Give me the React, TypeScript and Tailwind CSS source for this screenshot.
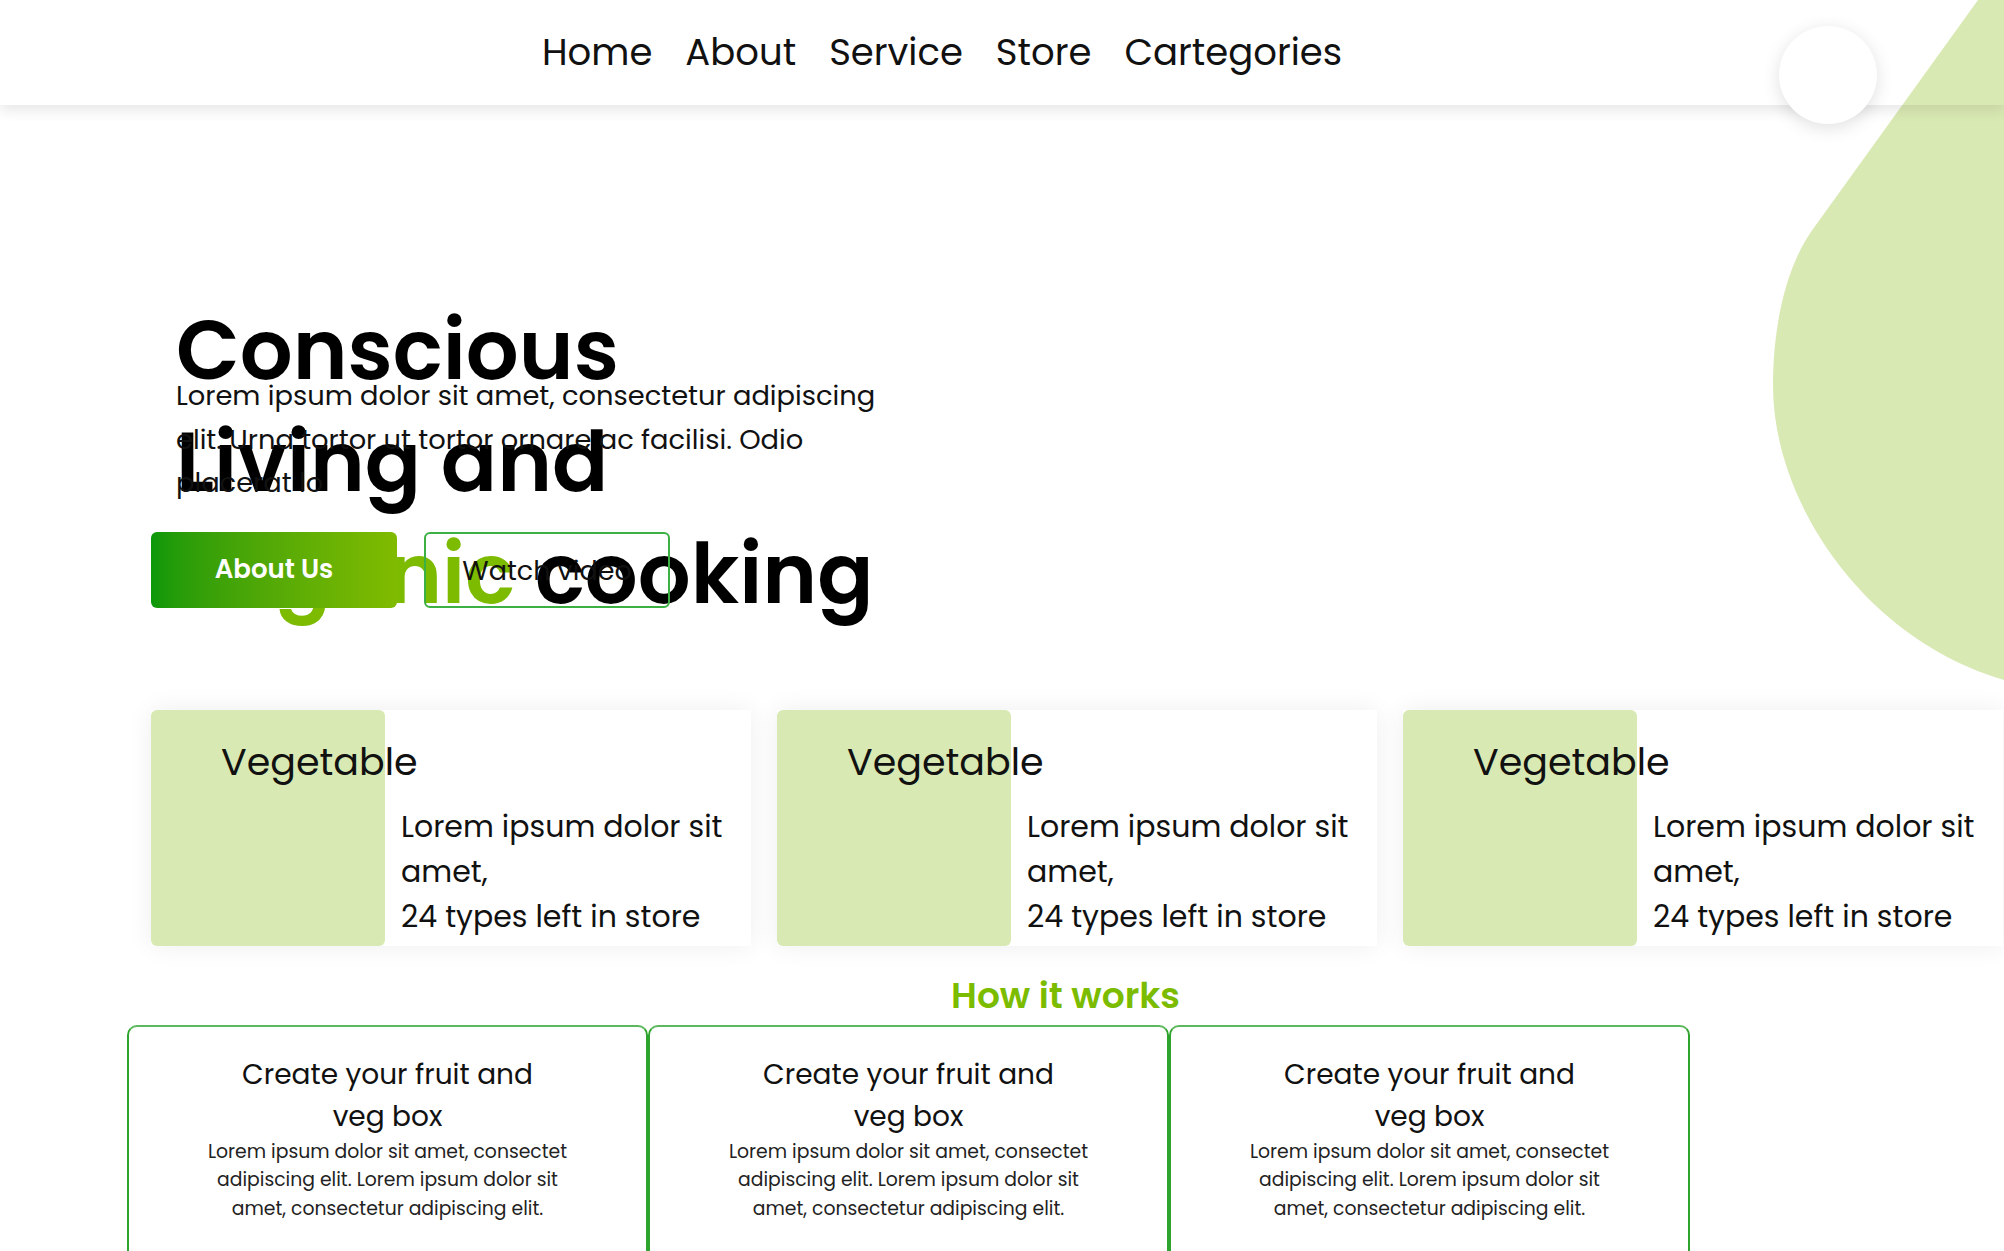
const navLinks = ['Home', 'About', 'Service', 'Store', 'Cartegories']
const items = [0, 1, 2]

function Blob() {
  return (
    <svg
      className="absolute right-0 top-0 h-[690px] w-[232px]"
      viewBox="0 0 232 690"
      fill="none"
    >
      <path
        d="M206 0 L41 229 C15 265 1 322 1 386 C1 500 90 638 232 680 L232 0 Z"
        fill="#d9e9b3"
      />
    </svg>
  )
}

function VegCard() {
  return (
    <div className="flex h-[236px] w-[600px] shrink-0 bg-white shadow-[0_0_24px_rgba(0,0,0,0.07)]">
      <div className="w-[234px] shrink-0 rounded-md bg-[#d9e9b3]" />
      <div className="pl-4 pt-[22px]">
        <h3 className="-ml-[180px] text-[38px] leading-[60px] text-[#111]">Vegetable</h3>
        <p className="mt-[12px] text-[30px] leading-[45px] text-[#111]">
          Lorem ipsum dolor sit
          <br />
          amet,
          <br />
          24 types left in store
        </p>
      </div>
    </div>
  )
}

function StepCard() {
  return (
    <div className="min-h-[280px] w-[521px] shrink-0 rounded-t-[10px] border-x-2 border-t-2 border-x-[#2ea42e] border-t-[#5cb85c] pt-[27px] text-center">
      <h4 className="text-[28px] leading-[42px] text-[#111]">
        Create your fruit and
        <br />
        veg box
      </h4>
      <p className="text-[18.8px] leading-[28.5px] text-[#222]">
        Lorem ipsum dolor sit amet, consectet
        <br />
        adipiscing elit. Lorem ipsum dolor sit
        <br />
        amet, consectetur adipiscing elit.
      </p>
    </div>
  )
}

export default function App() {
  return (
    <div className="relative min-h-screen w-full overflow-hidden bg-white font-[family-name:Poppins,Inter,sans-serif] text-black">
      <Blob />

      {/* Nav */}
      <nav className="relative flex h-[105px] justify-between pl-[542px] pr-[127px] shadow-[0_6px_12px_rgba(0,0,0,0.09)]">
        <ul className="flex items-center gap-[33px] text-[37px] leading-none text-[#111]">
          {navLinks.map((link) => (
            <li key={link}>
              <a href="#">{link}</a>
            </li>
          ))}
        </ul>
        <div className="mt-[26px] size-[98px] rounded-full bg-white shadow-[0_4px_18px_rgba(0,0,0,0.12)]" />
      </nav>

      {/* Hero */}
      <section className="pl-[176px] pt-[189px]">
        <h1 className="h-[80px] text-[83px] font-semibold leading-[112px]">
          Conscious
          <br />
          Living and
          <br />
          <span className="text-[#7cbb00]">Organic</span> cooking
        </h1>
        <p className="text-[27.3px] leading-[43.5px] text-[#111]">
          Lorem ipsum dolor sit amet, consectetur adipiscing
          <br />
          elit. Urna tortor ut tortor ornare ac facilisi. Odio
          <br />
          placerat lo
        </p>
        <div className="relative -ml-[25px] mt-[27px] flex gap-[27px]">
          <button className="h-[76px] w-[246px] rounded-md bg-gradient-to-r from-[#0a980a] to-[#80bb00] text-[26px] font-semibold text-white">
            About Us
          </button>
          <button className="h-[76px] w-[246px] rounded-md border-2 border-[#3cb043] pt-1 text-[27px] text-[#111]">
            Watch video
          </button>
        </div>
      </section>

      {/* Categories */}
      <div className="mt-[102px] flex gap-[26px] pl-[151px]">
        {items.map((i) => (
          <VegCard key={i} />
        ))}
      </div>

      {/* How it works */}
      <section className="ml-[127px] mt-[23px]">
        <h2 className="text-center text-[36px] font-semibold leading-[54px] text-[#7cbc00]">
          How it works
        </h2>
        <div className="mt-[2px] flex">
          {items.map((i) => (
            <StepCard key={i} />
          ))}
        </div>
      </section>
    </div>
  )
}
